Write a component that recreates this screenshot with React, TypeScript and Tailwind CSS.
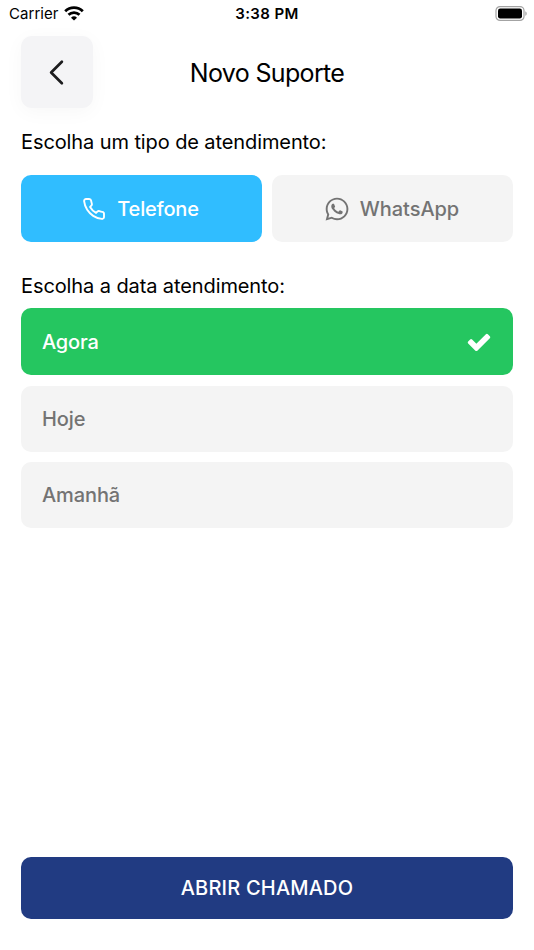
import React from 'react';
import { ChevronLeft } from 'lucide-react';
import { FaWhatsapp } from 'react-icons/fa';
import { FiPhone } from 'react-icons/fi';

const dates = ['Agora', 'Hoje', 'Amanhã'];

const StatusBar = () => {
  return <div className="grid h-[28px] grid-cols-3 items-center pl-[9px] pr-[7px] text-[15px] leading-[28px]">
      <div className="flex items-center gap-[5px]">
        <span className="tracking-[0.05px]">Carrier</span>
        <svg className="h-[15px] w-[20px] -translate-y-[1px]" viewBox="0 0 20 15" fill="none" stroke="currentColor" strokeWidth="2.8">
          <path d="M1.2 5.3a12.6 12.6 0 0 1 17.6 0" />
          <path d="M4.5 8.8a7.9 7.9 0 0 1 11 0" />
          <path d="M10 14.6 7 11.7a4.3 4.3 0 0 1 6 0z" fill="currentColor" stroke="none" />
        </svg>
      </div>
      <span className="-ml-[2px] text-center font-semibold tracking-[0.4px]">3:38 PM</span>
      <svg className="h-[15px] w-[32px] -translate-y-[1px] justify-self-end" viewBox="0 0 32 15">
        <rect x="1" y="0.6" width="28" height="13.8" rx="4" fill="none" stroke="#a3a3a3" strokeWidth="1.2" />
        <rect x="3" y="2.5" width="24" height="10" rx="2.2" />
        <path d="M30.3 5.2v4.6c.9-.4 1.4-1.3 1.4-2.3s-.5-1.9-1.4-2.3z" fill="#a3a3a3" />
      </svg>
    </div>;
};

const CheckIcon = () => {
  return <svg className="h-[26px] w-[26px]" viewBox="0 0 1792 1792" fill="currentColor">
      <path d="M1671 566q0 40-28 68l-724 724-136 136q-28 28-68 28t-68-28l-136-136-362-362q-28-28-28-68t28-68l136-136q28-28 68-28t68 28l294 295 656-657q28-28 68-28t68 28l136 136q28 28 28 68z" />
    </svg>;
};

const App = () => {
  return <div className="flex h-[950px] w-[534px] flex-col bg-white font-['Inter','Liberation_Sans',sans-serif] text-black">
      <StatusBar />

      <div className="mt-[8px] grid h-[72px] grid-cols-[72px_1fr_72px] items-center px-[21px]">
        <button className="flex h-[72px] w-[72px] items-center justify-center rounded-[11px] bg-[#f4f4f6] pr-[1px] pt-[1px] shadow-[0_4px_20px_rgba(0,0,0,0.035)]">
          <ChevronLeft className="h-[43px] w-[43px]" strokeWidth={1.5} color="#1c1c1e" />
        </button>
        <h1 className="pt-[3px] text-center text-[25px] tracking-[-0.65px]">Novo Suporte</h1>
      </div>

      <div className="mt-[20px] px-[21px]">
        <p className="h-[28px] text-[20px] leading-[28px] tracking-[-0.1px]">Escolha um tipo de atendimento:</p>
        <div className="mt-[19px] grid grid-cols-2 gap-[10px]">
          <button className="flex h-[67px] items-center justify-center gap-[11px] rounded-[10px] bg-[#30bdff] pr-[2px] text-[20px] font-medium tracking-[-0.18px] text-white">
            <FiPhone className="h-[24px] w-[24px]" strokeWidth={1.9} />
            Telefone
          </button>
          <button className="flex h-[67px] items-center justify-center gap-[10px] rounded-[10px] bg-[#f4f4f4] pr-[2px] text-[20px] font-medium tracking-[-0.05px] text-[#737373]">
            <FaWhatsapp className="h-[26px] w-[26px]" />
            WhatsApp
          </button>
        </div>
      </div>

      <div className="mt-[30px] px-[21px]">
        <p className="h-[28px] text-[20px] leading-[28px] tracking-[-0.1px]">Escolha a data atendimento:</p>
        <div className="mt-[8px] flex flex-col">
          {dates.map((date) => <button key={date} className={date === 'Agora' ? 'mb-[11px] flex h-[67px] items-center justify-between rounded-[10px] bg-[#25c660] px-[21px] text-[20px] font-medium tracking-[-0.18px] text-white' : 'mb-[10px] flex h-[66px] items-center rounded-[10px] bg-[#f4f4f4] px-[21px] text-[20px] font-medium tracking-[-0.1px] text-[#737373]'}>
              {date}
              {date === 'Agora' && <CheckIcon />}
            </button>)}
        </div>
      </div>

      <div className="mt-auto px-[21px] pb-[31px]">
        <button className="h-[62px] w-full rounded-[10px] bg-[#213b82] text-[20px] font-medium tracking-[0.2px] text-white">
          ABRIR CHAMADO
        </button>
      </div>
    </div>;
};
export default App;
